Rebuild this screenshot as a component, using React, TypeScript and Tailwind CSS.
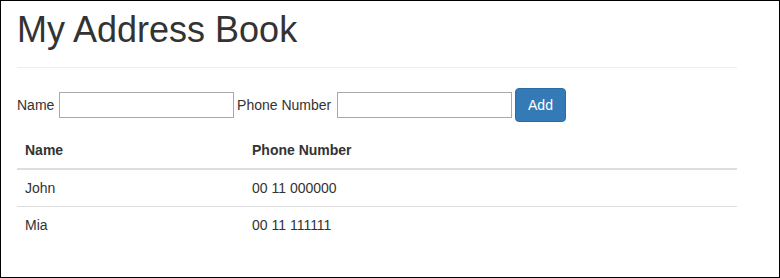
const CONTACTS = [
  { name: 'John', phone: '00 11 000000' },
  { name: 'Mia', phone: '00 11 111111' },
];

export default function App() {
  return (
    <div className="w-[780px] h-[278px] border border-black bg-white px-[16px] pt-[9px] text-[14px] text-[#333] font-['Liberation_Sans',Arial,sans-serif]">
      <h1 className="text-[36px] leading-[39.6px] font-normal">My Address Book</h1>
      <hr className="mt-[17px] w-[720px] border-0 border-t border-[#eee]" />

      <form className="mt-[20px] flex items-center" onSubmit={(e) => e.preventDefault()}>
        <label className="leading-[20px]">Name</label>
        <input type="text" className="ml-[4.7px] w-[175px] h-[26px] border border-[#a9a9a9] px-[2px] outline-none" />
        <label className="ml-[3px] leading-[20px]">Phone Number</label>
        <input type="text" className="ml-[5.8px] w-[175px] h-[26px] border border-[#a9a9a9] px-[2px] outline-none" />
        <button
          type="submit"
          className="ml-[3px] h-[34px] px-[12px] rounded-[4px] border border-[#2e6da4] bg-[#337ab7] text-white leading-[20px]"
        >
          Add
        </button>
      </form>

      <table className="mt-[10px] w-[720px] border-collapse">
        <thead>
          <tr>
            <th className="w-[227px] px-[8px] py-[8px] text-left font-bold leading-[20px] border-b-2 border-[#ddd]">Name</th>
            <th className="px-[8px] py-[8px] text-left font-bold leading-[20px] border-b-2 border-[#ddd]">Phone Number</th>
          </tr>
        </thead>
        <tbody>
          {CONTACTS.map((c, i) => (
            <tr key={c.name} className={i > 0 ? 'border-t border-[#ddd]' : ''}>
              <td className="px-[8px] py-[8px] leading-[20px]">{c.name}</td>
              <td className="px-[8px] py-[8px] leading-[20px]">{c.phone}</td>
            </tr>
          ))}
        </tbody>
      </table>
    </div>
  );
}
